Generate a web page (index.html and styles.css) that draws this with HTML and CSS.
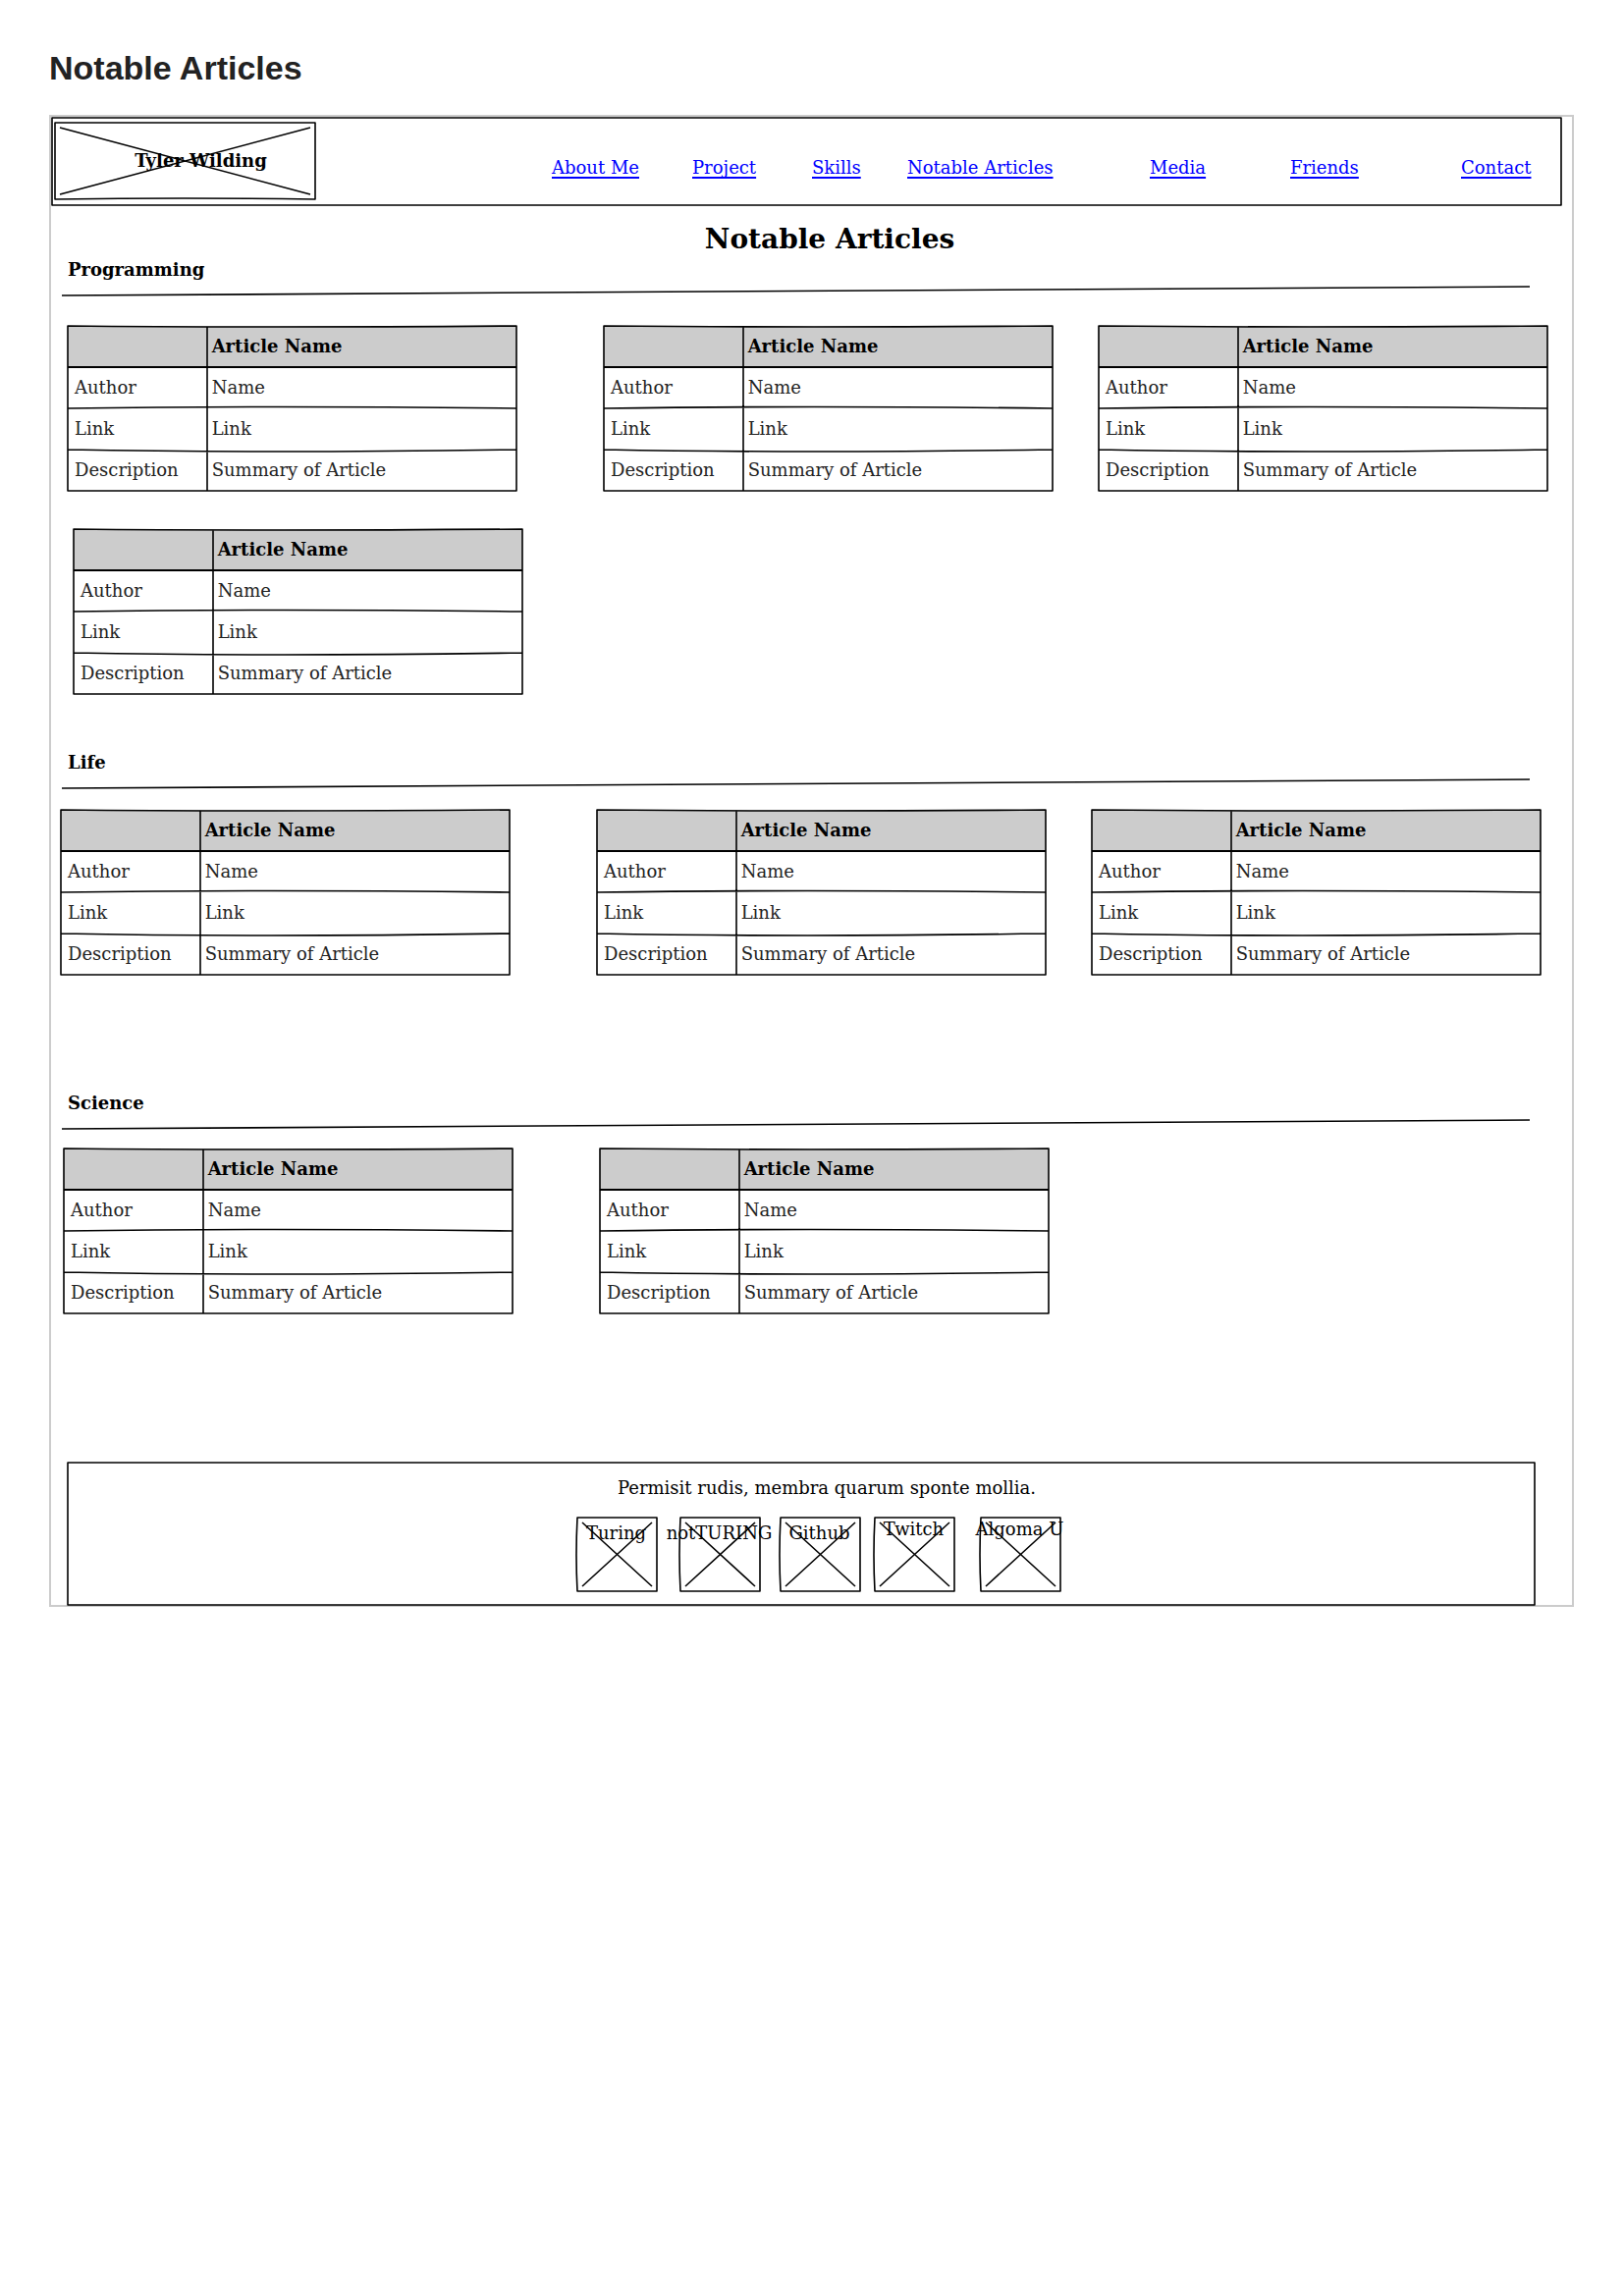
FILE: index.html
```html
<!DOCTYPE html>
<html lang="en">
<head>
<meta charset="utf-8">
<meta name="viewport" content="width=device-width, initial-scale=1">
<title>Notable Articles</title>
<link rel="stylesheet" href="styles.css">
</head>
<body>
<!-- Shared hand-drawn line shapes -->
<svg class="symbols" aria-hidden="true">
  <symbol id="grid" viewBox="0 0 457 168" preserveAspectRatio="none" overflow="visible">
    <path class="ink" d="M0 0Q200 2 457 0V168H0ZM142 1V168M0 84Q200 81 457 84M0 126Q200 130 457 126"/>
    <path class="ink ink-heavy" d="M0 42Q200 41 457 42"/>
  </symbol>
  <symbol id="rule" viewBox="0 0 1495 11" preserveAspectRatio="none" overflow="visible">
    <path class="ink" d="M0 10L1495 1"/>
  </symbol>
  <symbol id="image" viewBox="0 0 82 75" preserveAspectRatio="none" overflow="visible">
    <path class="ink" d="M1 0H82V75H1Q-1 38 1 0ZM6 5L77 70M77 5L6 70"/>
  </symbol>
</svg>

<h1 class="page-title">Notable Articles</h1>

<div class="frame">
  <header class="site-header">
    <svg class="outline" viewBox="0 0 1539 91" preserveAspectRatio="none" aria-hidden="true"><path class="ink" d="M1 1Q700 2 1538 1V90Q900 92 1 90Z"/></svg>
    <div class="logo">
      <svg class="outline" viewBox="0 0 265 78" preserveAspectRatio="none" aria-hidden="true"><path class="ink" d="M0 0H265V78Q130 76 0 78ZM5 5L260 73M260 5L5 73"/></svg>
      <span class="logo-name">Tyler Wilding</span>
    </div>
    <nav class="nav">
      <a href="#about">About Me</a>
      <a href="#project">Project</a>
      <a href="#skills">Skills</a>
      <a href="#articles">Notable Articles</a>
      <a href="#media">Media</a>
      <a href="#friends">Friends</a>
      <a href="#contact">Contact</a>
    </nav>
  </header>

  <main id="articles">
    <h2 class="heading">Notable Articles</h2>

    <section class="programming">
      <h3 class="topic">Programming</h3>
      <svg class="rule" aria-hidden="true"><use href="#rule"/></svg>
      <div class="articles">
        <div class="article">
          <table>
            <thead><tr><td></td><th scope="col">Article Name</th></tr></thead>
            <tbody>
              <tr><th scope="row">Author</th><td>Name</td></tr>
              <tr><th scope="row">Link</th><td>Link</td></tr>
              <tr><th scope="row">Description</th><td>Summary of Article</td></tr>
            </tbody>
          </table>
          <svg class="outline" aria-hidden="true"><use href="#grid"/></svg>
        </div>
        <div class="article">
          <table>
            <thead><tr><td></td><th scope="col">Article Name</th></tr></thead>
            <tbody>
              <tr><th scope="row">Author</th><td>Name</td></tr>
              <tr><th scope="row">Link</th><td>Link</td></tr>
              <tr><th scope="row">Description</th><td>Summary of Article</td></tr>
            </tbody>
          </table>
          <svg class="outline" aria-hidden="true"><use href="#grid"/></svg>
        </div>
        <div class="article">
          <table>
            <thead><tr><td></td><th scope="col">Article Name</th></tr></thead>
            <tbody>
              <tr><th scope="row">Author</th><td>Name</td></tr>
              <tr><th scope="row">Link</th><td>Link</td></tr>
              <tr><th scope="row">Description</th><td>Summary of Article</td></tr>
            </tbody>
          </table>
          <svg class="outline" aria-hidden="true"><use href="#grid"/></svg>
        </div>
      </div>
      <div class="articles articles-more">
        <div class="article">
          <table>
            <thead><tr><td></td><th scope="col">Article Name</th></tr></thead>
            <tbody>
              <tr><th scope="row">Author</th><td>Name</td></tr>
              <tr><th scope="row">Link</th><td>Link</td></tr>
              <tr><th scope="row">Description</th><td>Summary of Article</td></tr>
            </tbody>
          </table>
          <svg class="outline" aria-hidden="true"><use href="#grid"/></svg>
        </div>
      </div>
    </section>

    <section class="life">
      <h3 class="topic">Life</h3>
      <svg class="rule" aria-hidden="true"><use href="#rule"/></svg>
      <div class="articles">
        <div class="article">
          <table>
            <thead><tr><td></td><th scope="col">Article Name</th></tr></thead>
            <tbody>
              <tr><th scope="row">Author</th><td>Name</td></tr>
              <tr><th scope="row">Link</th><td>Link</td></tr>
              <tr><th scope="row">Description</th><td>Summary of Article</td></tr>
            </tbody>
          </table>
          <svg class="outline" aria-hidden="true"><use href="#grid"/></svg>
        </div>
        <div class="article">
          <table>
            <thead><tr><td></td><th scope="col">Article Name</th></tr></thead>
            <tbody>
              <tr><th scope="row">Author</th><td>Name</td></tr>
              <tr><th scope="row">Link</th><td>Link</td></tr>
              <tr><th scope="row">Description</th><td>Summary of Article</td></tr>
            </tbody>
          </table>
          <svg class="outline" aria-hidden="true"><use href="#grid"/></svg>
        </div>
        <div class="article">
          <table>
            <thead><tr><td></td><th scope="col">Article Name</th></tr></thead>
            <tbody>
              <tr><th scope="row">Author</th><td>Name</td></tr>
              <tr><th scope="row">Link</th><td>Link</td></tr>
              <tr><th scope="row">Description</th><td>Summary of Article</td></tr>
            </tbody>
          </table>
          <svg class="outline" aria-hidden="true"><use href="#grid"/></svg>
        </div>
      </div>
    </section>

    <section class="science">
      <h3 class="topic">Science</h3>
      <svg class="rule" aria-hidden="true"><use href="#rule"/></svg>
      <div class="articles">
        <div class="article">
          <table>
            <thead><tr><td></td><th scope="col">Article Name</th></tr></thead>
            <tbody>
              <tr><th scope="row">Author</th><td>Name</td></tr>
              <tr><th scope="row">Link</th><td>Link</td></tr>
              <tr><th scope="row">Description</th><td>Summary of Article</td></tr>
            </tbody>
          </table>
          <svg class="outline" aria-hidden="true"><use href="#grid"/></svg>
        </div>
        <div class="article">
          <table>
            <thead><tr><td></td><th scope="col">Article Name</th></tr></thead>
            <tbody>
              <tr><th scope="row">Author</th><td>Name</td></tr>
              <tr><th scope="row">Link</th><td>Link</td></tr>
              <tr><th scope="row">Description</th><td>Summary of Article</td></tr>
            </tbody>
          </table>
          <svg class="outline" aria-hidden="true"><use href="#grid"/></svg>
        </div>
      </div>
    </section>
  </main>

  <footer class="site-footer">
    <svg class="outline" viewBox="0 0 1494 145" preserveAspectRatio="none" aria-hidden="true"><path class="ink" d="M0 0H1494V145Q740 143 0 145Z"/></svg>
    <p class="motto">Permisit rudis, membra quarum sponte mollia.</p>
    <ul class="badges">
      <li class="badge"><svg class="outline" aria-hidden="true"><use href="#image"/></svg><span>Turing</span></li>
      <li class="badge"><svg class="outline" aria-hidden="true"><use href="#image"/></svg><span>notTURING</span></li>
      <li class="badge"><svg class="outline" aria-hidden="true"><use href="#image"/></svg><span>Github</span></li>
      <li class="badge badge-raised"><svg class="outline" aria-hidden="true"><use href="#image"/></svg><span>Twitch</span></li>
      <li class="badge badge-raised"><svg class="outline" aria-hidden="true"><use href="#image"/></svg><span>Algoma U</span></li>
    </ul>
  </footer>
</div>
</body>
</html>
```
FILE: styles.css
```css
* {
  box-sizing: border-box;
}

body {
  margin: 0;
  padding: 49px 51px 49px 50px;
  background: #fff;
  color: #000;
  font: 18px/24px "DejaVu Serif", serif;
}

h1, h2, h3, p, ul {
  margin: 0;
  padding: 0;
}

.symbols {
  position: absolute;
  width: 0;
  height: 0;
}

.ink {
  fill: none;
  stroke: #000;
  stroke-width: 1.6px;
  stroke-linejoin: round;
  vector-effect: non-scaling-stroke;
}

.ink-heavy {
  stroke-width: 2.2px;
}

/* Line work laid over the box it outlines */
.outline {
  position: absolute;
  inset: 0;
  width: 100%;
  height: 100%;
  overflow: visible;
  pointer-events: none;
}

.page-title {
  margin-bottom: 28px;
  color: #222;
  font: bold 34px/40px "Liberation Sans", sans-serif;
}

.frame {
  border: 2px solid #ccc;
}

.site-header {
  position: relative;
  display: flex;
  gap: 241px;
  min-height: 91px;
  margin-right: 10px;
  padding: 6px 30px 7px 4px;
}

.logo {
  position: relative;
  display: flex;
  flex: none;
  align-items: center;
  justify-content: center;
  width: 265px;
  height: 78px;
  padding-left: 32px;
}

.logo-name {
  font-weight: bold;
}

.nav {
  display: grid;
  flex: 1;
  grid-template-columns: 143fr 122fr 97fr 247fr 143fr 174fr 73fr;
  align-items: center;
  justify-items: start;
  padding-top: 13px;
}

.nav a {
  color: #00f;
  white-space: nowrap;
  text-decoration-thickness: 2px;
  text-decoration-skip-ink: none;
  text-underline-offset: 3px;
}

.heading {
  padding: 17px 0 2px 37px;
  font-size: 28px;
  line-height: 34px;
  text-align: center;
}

.topic {
  padding-left: 17px;
  font-size: 18px;
}

.rule {
  display: block;
  width: calc(100% - 54px);
  height: 11px;
  margin: 4px 43px 0 11px;
}

.articles {
  display: grid;
  grid-template-columns: 457fr 89fr 457fr 47fr 457fr;
}

.article {
  position: relative;
  grid-column: 1;
}

.article:nth-child(2) {
  grid-column: 3;
}

.article:nth-child(3) {
  grid-column: 5;
}

.programming .articles {
  margin: 30px 25px 0 17px;
}

.programming .articles-more {
  margin: 39px 19px 0 23px;
}

.life {
  margin-top: 58px;
}

.life .articles {
  margin: 21px 32px 0 10px;
}

.science {
  margin-top: 119px;
}

.science .articles {
  margin: 19px 29px 0 13px;
}

table {
  width: 100%;
  table-layout: fixed;
  border-collapse: collapse;
}

td,
th {
  height: 42px;
  padding: 0 5px;
  color: #222;
  font-weight: normal;
  text-align: left;
}

tr > :first-child {
  width: 31%;
  padding: 0 7px;
}

thead {
  background: #ccc;
}

thead th {
  color: #000;
  font-weight: bold;
}

.site-footer {
  position: relative;
  margin: 152px 38px 0 17px;
  padding: 14px 0;
}

.motto {
  padding-left: 52px;
  text-align: center;
}

.badges {
  display: grid;
  grid-template-columns: 105px 102px 96px 108px 82px;
  justify-content: center;
  margin-top: 18px;
  padding-left: 34px;
  list-style: none;
}

.badge {
  position: relative;
  display: flex;
  align-items: flex-start;
  justify-content: center;
  width: 82px;
  height: 75px;
  padding-top: 4px;
  white-space: nowrap;
}

.badge-raised {
  padding-top: 0;
}
```
